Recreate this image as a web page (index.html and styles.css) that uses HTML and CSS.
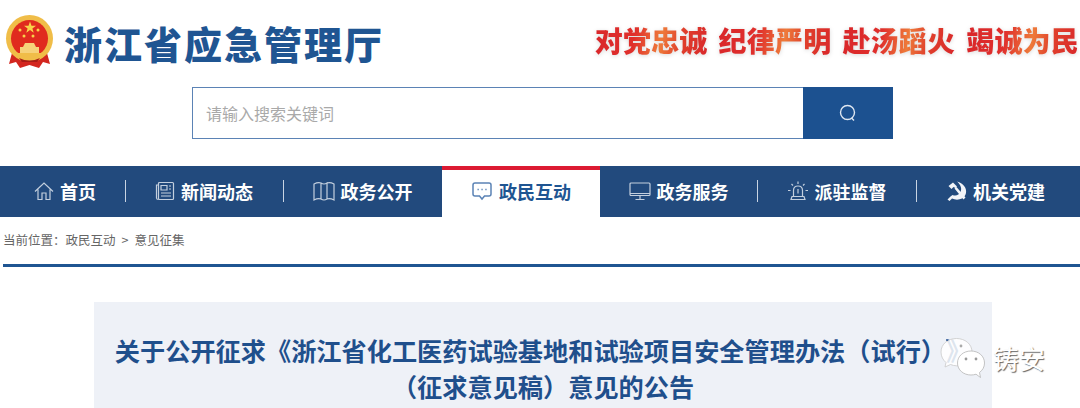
FILE: index.html
```html
<!DOCTYPE html>
<html lang="zh-CN">
<head>
    <meta charset="UTF-8">
    <title>浙江省应急管理厅</title>
    <link rel="stylesheet" href="styles.css">
</head>
<body>
    <div class="header">
        <svg class="emblem" viewBox="0 0 49 53">
            <path d="M7 38 L4 49 L11 47 L15 53 L24.500 50 L34 53 L38 47 L45 49 L42 38 Z" fill="#d3261f"/>
            <circle cx="24.5" cy="23.5" r="23.5" fill="#f0bd48"/>
            <circle cx="24.5" cy="23.5" r="18.500" fill="#e02a1e"/>
            <polygon points="25,6.500 26.500,10.700 31,10.700 27.400,13.400 28.700,17.700 25,15.100 21.300,17.700 22.600,13.400 19,10.700 23.500,10.700" fill="#f8d24a"/>
            <circle cx="15" cy="15" r="1.500" fill="#f8d24a"/>
            <circle cx="33" cy="15" r="1.500" fill="#f8d24a"/>
            <circle cx="19" cy="21" r="1.500" fill="#f8d24a"/>
            <circle cx="28" cy="21" r="1.500" fill="#f8d24a"/>
            <path d="M20 28 H29 L31 32 H34 V38 H15 V32 H18 Z" fill="#f6d27a"/>
            <path d="M8 38 H41 L38 42 H11 Z" fill="#f0bd48"/>
            <path d="M14 43 Q24.5 48 35 43 L32 47 H17 Z" fill="#a81c16"/>
        </svg>
        <div class="site-name">浙江省应急管理厅</div>
        <div class="slogan">
            <span>对党忠诚</span>
            <span>纪律严明</span>
            <span>赴汤蹈火</span>
            <span>竭诚为民</span>
        </div>
    </div>

    <div class="search">
        <div class="search-input">请输入搜索关键词</div>
        <div class="search-btn">
            <svg width="20" height="20" viewBox="0 0 20 20" fill="none" stroke="#dfe7f1" stroke-width="1.4">
                <circle cx="9.5" cy="9.5" r="7"/>
                <path d="M13.5 15 L16 17.5"/>
            </svg>
        </div>
    </div>

    <div class="nav">
        <a class="nav-item">
            <svg class="nav-icon" viewBox="0 0 20 20"><path d="M1 10.500 L10 2 L19 10.500 M4 8.500 V18.500 H8 V12 H12 V18.500 H16 V8.500"/></svg>
            首页
        </a>
        <a class="nav-item">
            <svg class="nav-icon" viewBox="0 0 20 20"><rect x="3.5" y="1.5" width="15" height="17" rx="1"/><path d="M3.500 4 H1.500 V17 Q1.500 18.500 3.500 18.500 M6 4.500 H12 V9 H6 Z M14 5 H16 M14 8 H16 M6 12 H16 M6 15 H16"/></svg>
            新闻动态
        </a>
        <a class="nav-item">
            <svg class="nav-icon nav-icon-wide" viewBox="0 0 22 20"><path d="M1 3 Q5 1 8 2 V18 Q5 17 1 19 Z M8 2 Q11 4 14 2 V18 Q11 20 8 18 M14 2 Q17 1 21 3 V19 Q17 17 14 18"/></svg>
            政务公开
        </a>
        <a class="nav-item active">
            <svg class="nav-icon nav-icon-wide" viewBox="0 0 20 20"><path d="M3 2 H17 Q19 2 19 4 V13 Q19 15 17 15 H12.500 L10 18 L7.500 15 H3 Q1 15 1 13 V4 Q1 2 3 2 Z"/><path class="dots" d="M5.500 8.500 H6.800 M9.400 8.500 H10.700 M13.300 8.500 H14.600"/></svg>
            政民互动
        </a>
        <a class="nav-item">
            <svg class="nav-icon nav-icon-wide" viewBox="0 0 22 20"><rect x="1" y="2" width="20" height="12.5" rx="1"/><path class="dots" d="M1 12.500 H21 M11 15 V18 M6.500 18.500 H15.500"/></svg>
            政务服务
        </a>
        <a class="nav-item">
            <svg class="nav-icon nav-icon-wide" viewBox="0 0 22 20"><path d="M6.500 15 V9.500 Q6.500 5 11 5 Q15.500 5 15.500 9.500 V15 M4 18.500 L5 15.500 H17 L18 18.500 Z M11 8 V12.500 M11 0.500 V3 M4.500 3 L6 4.500 M17.500 3 L16 4.500 M1 9.500 H3.500 M18.500 9.500 H21"/></svg>
            派驻监督
        </a>
        <a class="nav-item">
            <svg class="nav-icon nav-icon-solid" viewBox="0 0 20 20">
                <path d="M10 0.500 C16 2 20 7 19 12 C18.500 14.500 17 16.500 15 17.500 C12 19 8 19 5 17.500 L2.500 20 L0.500 18.500 L3.500 15.500 L5.500 14 C9 15.500 12 14 13.500 11 C15 8 14 4 10 0.500 Z"/>
                <path d="M1.500 5 L6 1.500 L10 5.500 L8.500 7 L6.500 6 L4.500 8 Z M7.500 7.500 L9.500 6 L18.500 16.500 L16.500 18.500 Z"/>
            </svg>
            机关党建
        </a>
    </div>

    <div class="crumb">当前位置：政民互动<span class="crumb-sep">&gt;</span>意见征集</div>
    <div class="rule"></div>

    <div class="notice">
        <h1>关于公开征求《浙江省化工医药试验基地和试验项目安全管理办法（试行）》<br>（征求意见稿）意见的公告</h1>
    </div>

    <div class="watermark">
        <svg class="wechat" width="46" height="40" viewBox="0 0 46 40">
            <path d="M16.500 0.500 C8 0.500 1 6 1 14 C1 18.500 3 22 6 24.500 L5 29 L10.500 26.500 C12.500 27.300 14.500 27.800 16.500 27.800 C25 27.800 32 22 32 14 C32 6 25 0.500 16.500 0.500 Z" fill="#fff" fill-opacity="0.85" stroke="#c9c9c9" stroke-width="0.8"/>
            <path d="M31 13 C23.500 13 17.500 18 17.500 25 C17.500 32 23.500 37 31 37 C33 37 34.500 36.700 36 36.200 L40.500 39.500 L39.500 34.500 C42.500 32.200 44.500 29.200 44.500 25 C44.500 18 38.500 13 31 13 Z" fill="#fff" stroke="#b5b5b5" stroke-width="0.8"/>
            <circle cx="26" cy="21" r="1.400" fill="#999"/>
            <circle cx="36" cy="21" r="1.400" fill="#999"/>
            <circle cx="21" cy="8" r="1.400" fill="#aaa"/>
            <circle cx="7" cy="2" r="1" fill="#2a5a9a"/>
        </svg>
        <span class="wm-text">铸安</span>
    </div>
</body>
</html>
```

FILE: styles.css
```css
html, body {
    margin: 0;
    padding: 0;
    height: 408px;
    overflow: hidden;
    background: white;
    font-family: "Noto Sans CJK SC", "Liberation Sans", sans-serif;
}

.header {
    display: flex;
    align-items: center;
    height: 87px;
    padding-left: 5px;
    box-sizing: border-box;
}

.emblem {
    width: 49px;
    height: 53px;
    margin-bottom: 4px;
    flex: none;
}

.site-name {
    margin: 0 0 2px 10px;
    font-size: 38px;
    font-weight: 900;
    letter-spacing: 2px;
    line-height: 1;
    color: #1f5592;
    white-space: nowrap;
}

.slogan {
    display: flex;
    gap: 11px;
    margin-left: auto;
    margin-right: 1px;
    margin-bottom: 6px;
    font-size: 28px;
    font-weight: 900;
    line-height: 1.2;
    letter-spacing: 0.2px;
    white-space: nowrap;
    filter: drop-shadow(0 1px 2px rgba(0, 0, 0, 0.15));
}

.slogan span {
    background: linear-gradient(100deg, #d9262a 0%, #e0302c 35%, #ee7a3a 58%, #e0402c 75%, #d9262a 100%);
    -webkit-background-clip: text;
    background-clip: text;
    color: transparent;
}

.search {
    display: flex;
    width: 701px;
    height: 52px;
    margin-left: 192px;
}

.search-input {
    flex: 1;
    display: flex;
    align-items: center;
    padding-left: 13px;
    border: 1px solid #5b83b5;
    border-right: none;
    font-size: 16px;
    color: #a9a9a9;
}

.search-btn {
    width: 90px;
    display: flex;
    align-items: center;
    justify-content: center;
    background: #1c5190;
}

.nav {
    display: grid;
    grid-template-columns: 125px 158px 159px 158px 157px 159px 160px;
    height: 51px;
    margin-top: 27px;
    background: #224a7d;
}

.nav-item {
    position: relative;
    display: flex;
    align-items: center;
    justify-content: center;
    gap: 6px;
    padding-bottom: 2px;
    box-sizing: border-box;
    font-size: 18px;
    font-weight: 700;
    color: white;
}

.nav-item:first-child {
    padding-left: 5px;
}

.nav-item + .nav-item::before {
    content: "";
    position: absolute;
    left: 0;
    top: 14px;
    height: 22px;
    width: 1px;
    background: #c9d4e3;
}

.nav-item.active::before,
.nav-item.active + .nav-item::before {
    display: none;
}

.nav-item.active {
    height: 51px;
    padding-bottom: 5px;
    background: white;
    border-top: 4px solid #dc1a32;
    color: #1f5592;
}

.nav-icon {
    width: 20px;
    height: 20px;
    flex: none;
    fill: none;
    stroke: #c3cfde;
    stroke-width: 1.2;
}

.nav-icon-wide {
    width: 22px;
}

.active .nav-icon {
    stroke: #5b83b5;
    stroke-width: 1.5;
}

.active .dots {
    stroke-width: 1.6;
}

.nav-icon-solid {
    fill: #f2f4f8;
    stroke: none;
}

.crumb {
    height: 47px;
    padding-left: 3px;
    font-size: 12.5px;
    line-height: 45px;
    color: #666;
}

.crumb-sep {
    margin: 0 6px;
}

.rule {
    height: 3px;
    margin-left: 3px;
    background: #1f5592;
}

.notice {
    width: 898px;
    margin: 35px 0 0 94px;
    padding: 30px 0 4px;
    background: #eef1f7;
}

.notice h1 {
    margin: 0;
    font-size: 25.2px;
    font-weight: 700;
    line-height: 36px;
    text-align: center;
    color: #1f4f8c;
    white-space: nowrap;
    text-spacing-trim: space-all;
}

/* marca de agua encima del titulo */
.watermark {
    position: absolute;
    left: 940px;
    top: 338px;
    display: flex;
    align-items: center;
    gap: 7px;
}

.wm-text {
    font-size: 26px;
    line-height: 40px;
    color: #fff;
    text-shadow: 1px 1px 1px #666;
}
```
